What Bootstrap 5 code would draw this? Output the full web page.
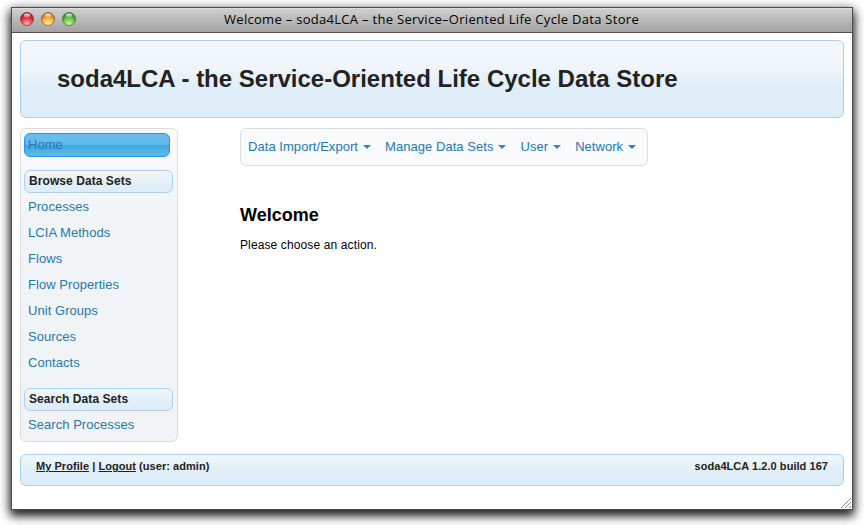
<!DOCTYPE html>
<html lang="en">
<head>
<meta charset="utf-8">
<meta name="viewport" content="width=device-width, initial-scale=1">
<title>Welcome - soda4LCA - the Service-Oriented Life Cycle Data Store</title>
<link href="https://cdn.jsdelivr.net/npm/bootstrap@5.3.0/dist/css/bootstrap.min.css" rel="stylesheet">
<style>
body{font-family:"Liberation Sans",Arial,sans-serif;font-size:12px;line-height:16px;color:#000;background:#fff;height:525px;overflow:hidden}
a{color:#2779aa;text-decoration:none}
.app-window{width:842px;height:503px;margin:7px 0 0 11px;border:1px solid #4c4c4c;background:#fff;box-shadow:0 5px 9px 1px rgba(0,0,0,.8),0 2px 12px rgba(0,0,0,.35)}
.titlebar{height:25px;padding:0 8px;background:linear-gradient(#d0d0d0,#a2a2a2);border-bottom:1px solid #515151;box-shadow:inset 0 1px #dcdcdc}
.titlebar svg{display:block}
.win-title{font:13px/22px "Lucida Grande","Open Sans",sans-serif;letter-spacing:.295px;white-space:nowrap;margin-left:148px}
.page-body{padding:7px 8px 0}
.panel-blue{border:1px solid #aed0ea;border-radius:6px;color:#222}
.masthead{height:78px;background:linear-gradient(#f2f7fb 0,#f1f6fb 30%,#deedf7 65%,#deedf7);padding:0 36px}
.masthead h1{font-size:24px;line-height:75px;font-weight:700;white-space:nowrap}
.body-row{margin:10px 0 12px}
.body-row main{margin-left:62px}
.side{width:158px;height:314px;border:1px solid #ddd;border-radius:6px;background:linear-gradient(#fafbfd,#f0f4f7 95px);padding:4px 3px}
.side a{font-size:13px;line-height:26px;padding-left:4px;letter-spacing:.05px}
.side .home-link{width:146px;height:24px;line-height:22px;border:1px solid #2694e8;border-radius:6px;padding-left:3px;background:linear-gradient(#6bbfed,#60b8e8 48%,#38a7df 50%,#45abe0 65%,#62bbe8)}
.side h2{width:149px;height:23px;margin:13px 0 1px;padding-left:4px;font-size:12px;line-height:21px;font-weight:700;letter-spacing:.07px;background:linear-gradient(#f0f6fb,#deedf7 80%)}
.side .search{margin-top:12px}
.menu{width:408px;height:38px;gap:14px;border:1px solid #ddd;border-radius:6px;background:#f9fafc;padding-left:7px;font-size:13px;letter-spacing:.05px}
.menu a::after{content:"";display:inline-block;margin-left:5px;vertical-align:2px;border:4px solid transparent;border-top-color:#3d80b3;border-bottom:0}
.welcome{font-size:18px;line-height:22px;font-weight:700;margin:38px 0 11px}
.hint{letter-spacing:.12px}
.footer-bar{height:32px;padding:0 15px;background:linear-gradient(#f0f6fb,#deedf7 60%);font-size:11px;line-height:23px;font-weight:700;letter-spacing:.05px}
.footer-bar a{color:#222;text-decoration:underline}
.grip{right:0;bottom:0}
</style>
</head>
<body>
<div class="app-window position-relative">
  <div class="titlebar d-flex">
    <svg width="56" height="22" viewBox="0 0 56 22" aria-hidden="true">
      <defs>
        <radialGradient id="r" cx=".5" cy=".9" r=".8"><stop stop-color="#ffc4c4"/><stop offset=".5" stop-color="#f2434e"/><stop offset="1" stop-color="#b01022"/></radialGradient>
        <radialGradient id="y" cx=".5" cy=".9" r=".8"><stop stop-color="#fff9a0"/><stop offset=".5" stop-color="#fbbd4d"/><stop offset="1" stop-color="#c96418"/></radialGradient>
        <radialGradient id="g" cx=".5" cy=".9" r=".8"><stop stop-color="#d4f79a"/><stop offset=".5" stop-color="#7bc956"/><stop offset="1" stop-color="#2b8127"/></radialGradient>
        <linearGradient id="s" x2="0" y2="1"><stop stop-color="#fff" stop-opacity=".95"/><stop offset="1" stop-color="#fff" stop-opacity=".15"/></linearGradient>
      </defs>
      <g stroke-width=".8">
        <circle cx="7" cy="11" r="6.5" fill="url(#r)" stroke="#8d3138"/>
        <circle cx="28" cy="11" r="6.5" fill="url(#y)" stroke="#99602b"/>
        <circle cx="49" cy="11" r="6.5" fill="url(#g)" stroke="#3d7835"/>
      </g>
      <g fill="url(#s)"><ellipse cx="7" cy="7.5" rx="3.3" ry="2.1"/><ellipse cx="28" cy="7.5" rx="3.3" ry="2.1"/><ellipse cx="49" cy="7.5" rx="3.3" ry="2.1"/></g>
    </svg>
    <div class="win-title">Welcome – soda4LCA – the Service–Oriented Life Cycle Data Store</div>
  </div>
  <div class="page-body d-flex flex-column">
    <header class="masthead panel-blue"><h1 class="m-0">soda4LCA - the Service-Oriented Life Cycle Data Store</h1></header>
    <div class="d-flex body-row">
      <nav class="side d-flex flex-column">
        <a class="home-link" href="#">Home</a>
        <h2 class="panel-blue">Browse Data Sets</h2>
        <a href="#">Processes</a><a href="#">LCIA Methods</a><a href="#">Flows</a><a href="#">Flow Properties</a><a href="#">Unit Groups</a><a href="#">Sources</a><a href="#">Contacts</a>
        <h2 class="panel-blue search">Search Data Sets</h2>
        <a href="#">Search Processes</a>
      </nav>
      <main>
        <nav class="menu d-flex align-items-center"><a href="#">Data Import/Export</a><a href="#">Manage Data Sets</a><a href="#">User</a><a href="#">Network</a></nav>
        <h2 class="welcome">Welcome</h2>
        <p class="hint m-0">Please choose an action.</p>
      </main>
    </div>
    <footer class="footer-bar panel-blue d-flex justify-content-between"><span><a href="#">My Profile</a> | <a href="#">Logout</a> (user: admin)</span><span>soda4LCA 1.2.0 build 167</span></footer>
  </div>
  <svg class="grip position-absolute" width="12" height="12" viewBox="0 0 12 12" fill="none" stroke="#8a8a8a" aria-hidden="true"><path d="M1 11 11 1M5 11l6-6M9 11l2-2"/></svg>
</div>
<script src="https://cdn.jsdelivr.net/npm/bootstrap@5.3.0/dist/js/bootstrap.bundle.min.js"></script>
</body>
</html>
